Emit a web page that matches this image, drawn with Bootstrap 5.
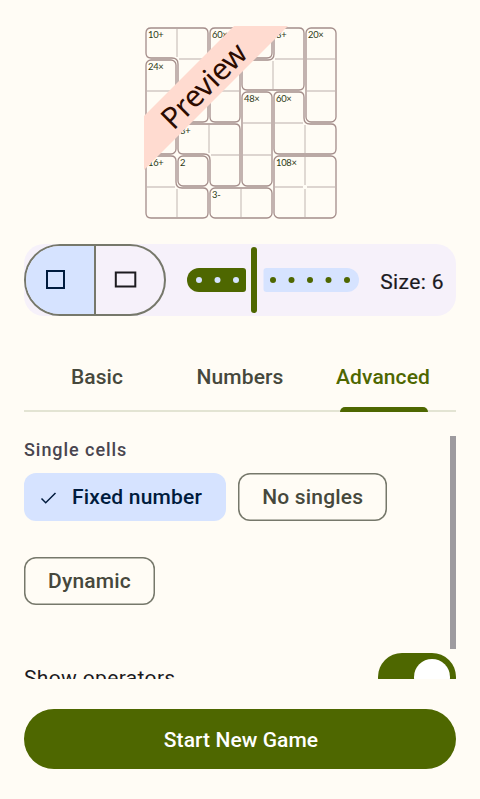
<!DOCTYPE html>
<html lang="en">
<head>
<meta charset="utf-8">
<meta name="viewport" content="width=device-width, initial-scale=1">
<title>New game</title>
<link href="https://cdn.jsdelivr.net/npm/bootstrap@5.3.0/dist/css/bootstrap.min.css" rel="stylesheet">
<style>
body{background:#fffcf5;font-family:Roboto,sans-serif;font-size:21px;line-height:30px;color:#1c1b1f;height:799px;overflow:hidden}
.preview-area{height:218px;padding-top:26px;margin-bottom:26px}
.size-bar{height:72px;border-radius:20px;background:#f6f1fa}
.orient{width:142px;height:72px;border:2px solid #76786b;border-radius:36px}
.orient .btn{border-radius:0;padding:0;flex:0 0 auto}
.orient .btn.on{background:#d6e3ff;border-right:2px solid #76786b}
.size-label{padding-right:12px;padding-top:3px;font-weight:400;letter-spacing:.4px;-webkit-text-stroke:.2px #1c1b1f}
.mode-tabs{height:72px;margin-top:24px;margin-bottom:0;border-bottom:2px solid #e3e4d3;flex-wrap:nowrap}
.mode-tabs .nav-link{height:72px;padding:2px 0 0;color:#46483c;font-weight:500;letter-spacing:.1px;border:0;line-height:70px}
.mode-tabs .nav-item:first-child .nav-link{padding-left:2px}
.mode-tabs .nav-link.active{color:#4e6700;padding-right:2px}
.mode-tabs .nav-link.active::after{content:"";position:absolute;left:28px;bottom:0;width:88px;height:5px;border-radius:5px 5px 0 0;background:#4e6700}
.options{height:243px;margin-top:24px;overflow:hidden}
.opt-title{font-size:18px;line-height:28px;font-weight:500;letter-spacing:.95px;color:#49454f}
.chips{margin-top:9px;gap:36px 12px}
.chip{height:48px;border:0;box-shadow:inset 0 0 0 1.5px #76786b;border-radius:12px;padding:0 24px;font-size:21px;line-height:1;font-weight:500;letter-spacing:.2px;color:#46483c}
.chip.on{background:#d6e3ff;box-shadow:none;color:#001b3d;padding-left:15px;padding-right:24px}
.chip svg{margin-right:14px}
.switch-row{margin-top:48px;height:48px;padding-top:1px}
.switch-row span{letter-spacing:.35px}
.side{margin-left:-78px}
.toggle{width:78px;height:48px;padding:6px;background:#4e6700}
.knob{width:36px;height:36px}
.bar{width:6px;height:213px;background:#9e9b9f}
.start{height:60px;margin-top:30px;padding:4px 0 0 2px;background:#4e6700;color:#fff;font-size:21px;font-weight:500;letter-spacing:.08px}
.start:hover{background:#435900;color:#fff}
.clues{font-family:Lato,sans-serif;font-size:9.4px;letter-spacing:-.3px}
</style>
<script src="https://cdn.jsdelivr.net/npm/bootstrap@5.3.0/dist/js/bootstrap.bundle.min.js"></script>
</head>
<body>
<main class="d-flex flex-column px-4">
  <div class="preview-area d-flex justify-content-center">
    <svg width="194" height="194" viewBox="143 26 194 194" class="flex-shrink-0">
      <g stroke="#ddd5d0" stroke-width="1.8">
        <path d="M177 29V57M179 59H207M147 91H175M147 123H175M179 91H207M211 59H239M211 91H239M241 29V57M275 59H303M273 61V89M307 59H335M307 91H335M209 125V153M211 155H239M243 123H271M243 155H271M275 123H303M305 125V153M147 187H175M177 189V217M241 189V217M275 187H303M307 187H335M305 157V185M305 189V217"/>
      </g>
      <g id="cages" fill="none" stroke="#a48d8a" stroke-width="1.3">
        <path d="M151 28H203Q208 28 208 33V117Q208 122 203 122H183Q178 122 178 117V64Q178 58 172 58H151Q146 58 146 53V33Q146 28 151 28Z"/>
        <path d="M215 28H267Q272 28 272 33V53Q272 58 267 58H246Q240 58 240 64V117Q240 122 235 122H215Q210 122 210 117V33Q210 28 215 28Z"/>
        <path d="M279 28H299Q304 28 304 33V85Q304 90 299 90H247Q242 90 242 85V65Q242 60 247 60H268Q274 60 274 54V33Q274 28 279 28Z"/>
        <rect x="306" y="28" width="30" height="94" rx="5"/>
        <rect x="146" y="60" width="30" height="94" rx="5"/>
        <path d="M183 124H235Q240 124 240 129V181Q240 186 235 186H215Q210 186 210 181V160Q210 154 204 154H183Q178 154 178 149V129Q178 124 183 124Z"/>
        <rect x="242" y="92" width="30" height="94" rx="5"/>
        <path d="M279 92H299Q304 92 304 97V118Q304 124 310 124H331Q336 124 336 129V149Q336 154 331 154H279Q274 154 274 149V97Q274 92 279 92Z"/>
        <path d="M151 156H171Q176 156 176 161V182Q176 188 182 188H203Q208 188 208 193V213Q208 218 203 218H151Q146 218 146 213V161Q146 156 151 156Z"/>
        <rect x="178" y="156" width="30" height="30" rx="5"/>
        <rect x="210" y="188" width="62" height="30" rx="5"/>
        <rect x="274" y="156" width="62" height="62" rx="5"/>
      </g>
      <g class="clues" fill="#2c3915">
        <text x="148" y="38">10+</text><text x="212" y="38">60×</text><text x="276" y="38">8+</text><text x="308" y="38">20×</text>
        <text x="148" y="70">24×</text><text x="244" y="102">48×</text><text x="276" y="102">60×</text>
        <text x="180" y="134">8+</text><text x="148" y="166">16+</text><text x="180" y="166">2</text><text x="276" y="166">108×</text><text x="212" y="198">3-</text>
      </g>
      <path d="M234 26H288L144 170V116Z" fill="#ffdbd0"/>
      <text transform="translate(173.500 131) rotate(-45)" font-family="'Noto Sans', sans-serif" font-size="30" fill="#2c0b00" textLength="107">Preview</text>
    </svg>
  </div>

  <section class="size-bar d-flex align-items-center">
    <div class="orient btn-group overflow-hidden flex-shrink-0" role="group" aria-label="Grid shape">
      <button type="button" class="btn on border-top-0 border-bottom-0 border-start-0 d-flex align-items-center h-100" aria-label="Square">
        <svg width="68" height="68" viewBox="26 246 68 68"><rect x="47" y="271" width="17" height="17" fill="none" stroke="#001b3d" stroke-width="2"/></svg>
      </button>
      <button type="button" class="btn border-0 d-flex align-items-center h-100" aria-label="Rectangle">
        <svg width="68" height="68" viewBox="95 246 68 68"><rect x="115.800" y="272.500" width="19.500" height="14" fill="none" stroke="#1c1b1f" stroke-width="2"/></svg>
      </button>
    </div>
    <svg class="flex-shrink-0" width="194" height="72" viewBox="166 244 194 72" role="img" aria-label="Size slider">
      <path d="M199 268H243Q246 268 246 271V289Q246 292 243 292H199A12 12 0 0 1 199 268Z" fill="#4e6700"/>
      <path d="M266.500 268H347A12 12 0 0 1 347 292H266.500Q263.500 292 263.500 289V271Q263.500 268 266.500 268Z" fill="#d6e3ff"/>
      <rect x="251" y="247" width="6" height="66" rx="3" fill="#4e6700"/>
      <g fill="#d6e3ff"><circle cx="199" cy="280" r="3"/><circle cx="217.500" cy="280" r="3"/><circle cx="236" cy="280" r="3"/></g>
      <g fill="#4e6700"><circle cx="273" cy="280" r="3"/><circle cx="291.500" cy="280" r="3"/><circle cx="310" cy="280" r="3"/><circle cx="328.500" cy="280" r="3"/><circle cx="347" cy="280" r="3"/></g>
    </svg>
    <span class="size-label ms-auto text-nowrap">Size: 6</span>
  </section>

  <ul class="nav mode-tabs nav-fill nav-justified">
    <li class="nav-item"><a class="nav-link" href="#">Basic</a></li>
    <li class="nav-item"><a class="nav-link" href="#">Numbers</a></li>
    <li class="nav-item"><a class="nav-link active position-relative" href="#">Advanced</a></li>
  </ul>

  <section class="options d-flex">
    <div class="flex-grow-1">
      <div class="opt-title">Single cells</div>
      <div class="chips d-flex flex-wrap">
        <button type="button" class="chip btn on d-inline-flex align-items-center"><svg width="19" height="20" viewBox="0 0 19 20" aria-hidden="true"><path d="M2.500 11.500L6.700 15.700L16.500 6" fill="none" stroke="#001b3d" stroke-width="1.500"/></svg>Fixed number</button>
        <button type="button" class="chip btn">No singles</button>
        <button type="button" class="chip btn">Dynamic</button>
      </div>
      <div class="switch-row d-flex align-items-center"><span>Show operators</span></div>
    </div>
    <div class="side d-flex flex-column align-items-end flex-shrink-0">
      <div class="bar flex-shrink-0"></div>
      <div class="toggle rounded-pill d-flex justify-content-end flex-shrink-0 mt-1"><div class="knob rounded-circle bg-white"></div></div>
    </div>
  </section>

  <button type="button" class="start btn rounded-pill w-100">Start New Game</button>
</main>
</body>
</html>
